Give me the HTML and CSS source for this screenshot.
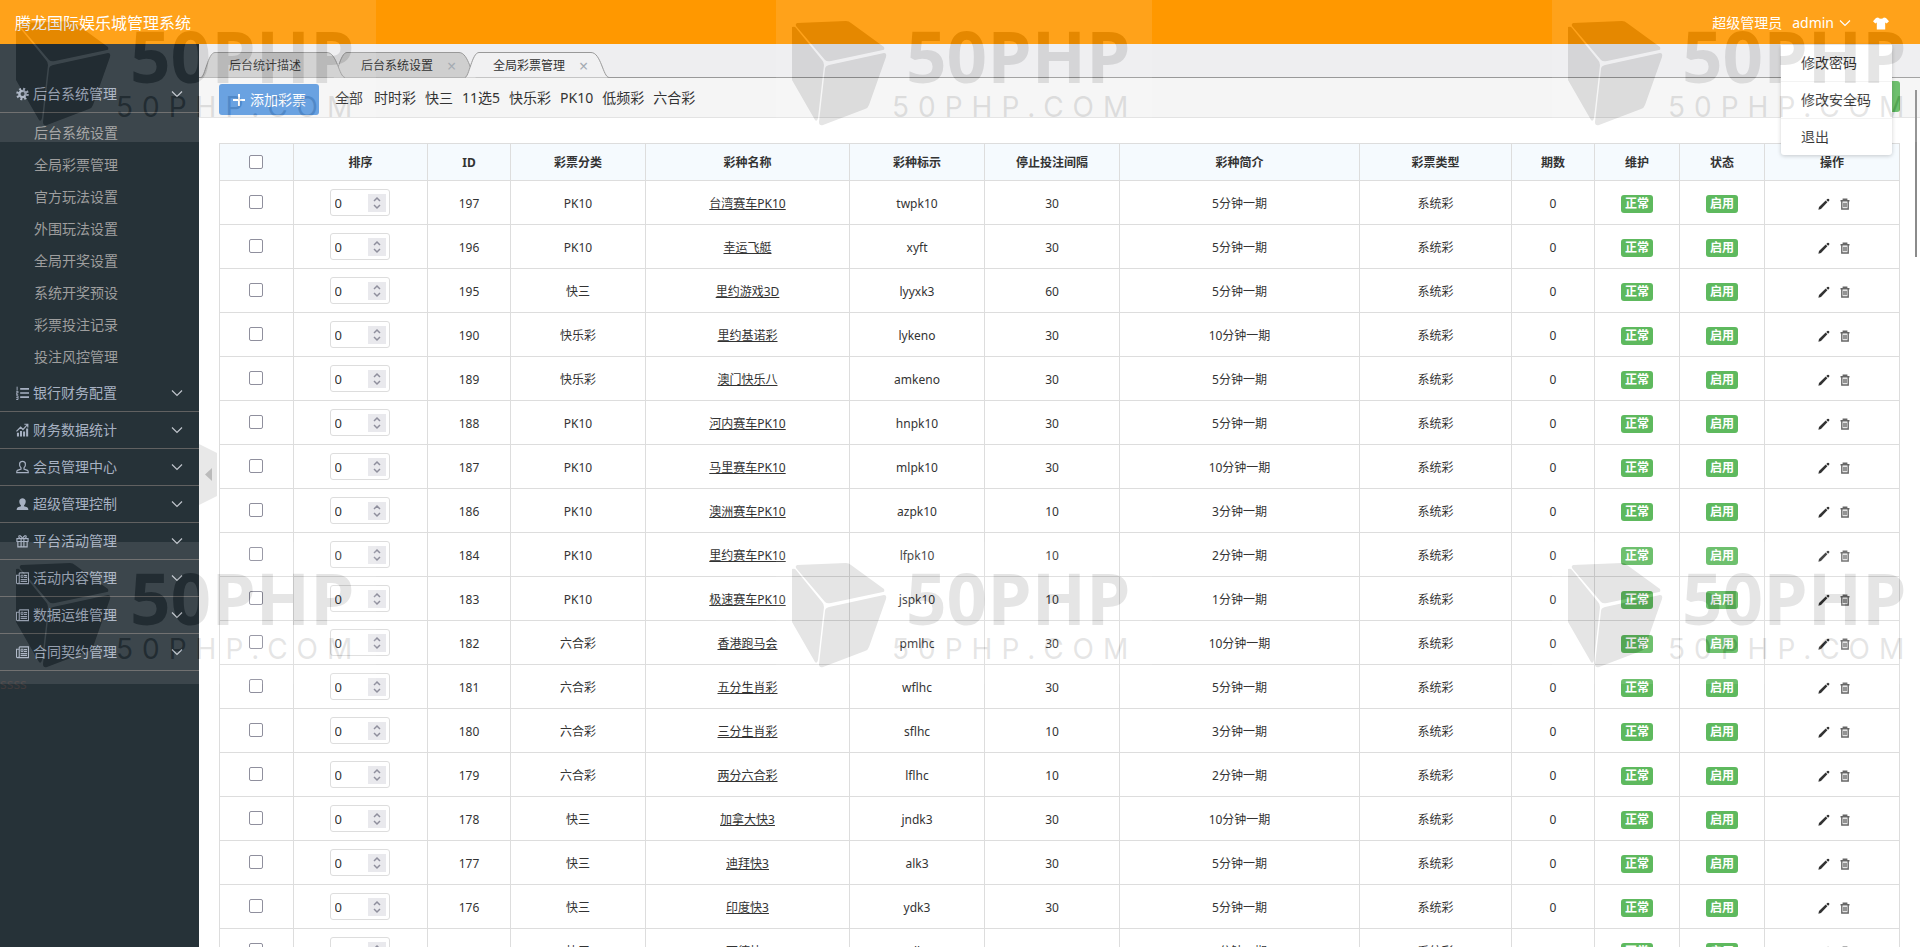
FILE: index.html
```
<!DOCTYPE html>
<html lang="zh-CN">
  <head>
    <meta charset="UTF-8" />
    <meta name="viewport" content="width=device-width, initial-scale=1.0" />
    <title>腾龙国际娱乐城管理系统</title>
    <link rel="stylesheet" href="styles.css">
  </head>

  <body>
    <!-- shared icons -->
    <svg class="sprite" aria-hidden="true">
      <symbol id="i-down" viewBox="0 0 12 12"><path d="M1 3.5 6 8.5 11 3.5" fill="none" stroke="currentColor" stroke-width="1.2"/></symbol>
      <symbol id="i-gear" viewBox="0 0 14 14">
        <circle cx="7" cy="7" r="3.4" fill="none" stroke="currentColor" stroke-width="2.6"/>
        <circle cx="7" cy="7" r="5.4" fill="none" stroke="currentColor" stroke-width="2.8" stroke-dasharray="2.1 2.14"/>
      </symbol>
      <symbol id="i-list" viewBox="0 0 14 14">
        <path d="M4.5 2.5H14M4.5 7H14M4.5 11.5H14" stroke="currentColor" stroke-width="1.8"/>
        <path d="M1.2.2v4M.2 5.2h2v1.6h-2v1.6h2.2M.2 10h2v4h-2M.2 12h2" fill="none" stroke="currentColor" stroke-width="1"/>
      </symbol>
      <symbol id="i-chart" viewBox="0 0 14 14">
        <path d="M1 10h2.200v4H1zM4.300 8h2.200v6H4.300zM7.600 8.500h2.200V14H7.600zM10.900 5.500h2.200V14h-2.200z" fill="currentColor"/>
        <path d="M.5 8.500 5 4l2.500 2.500L12.500 1M9 .8h3.700v3.600" fill="none" stroke="currentColor" stroke-width="1.300"/>
      </symbol>
      <symbol id="i-user" viewBox="0 0 14 14">
        <path d="M5.400 8C4 6.500 3.600 4.800 3.900 3.300 4.200 1.600 5.500 1 7 1s2.800.6 3.100 2.300C10.400 4.800 10 6.500 8.600 8v1.200l3.800 1.400q.8.500.8 2.400H.8q0-1.900.8-2.400l3.800-1.400z" fill="none" stroke="currentColor" stroke-width="1.300"/>
      </symbol>
      <symbol id="i-user-solid" viewBox="0 0 14 14">
        <path d="M5.300 8.400C3.800 7 3.400 5 3.600 3.400 3.900 1.600 5.300.7 7 .7s3.100.9 3.400 2.700C10.600 5 10.200 7 8.700 8.400v.9l3.300 1.100q1.300.6 1.300 3.100H.7q0-2.500 1.300-3.100l3.300-1.100z" fill="currentColor"/>
      </symbol>
      <symbol id="i-gift" viewBox="0 0 14 14">
        <path d="M1 4.500h12v3H1zM2 7.500h10v5.800H2zM5.500 4.500v8.800M8.500 4.500v8.800M6.800 4.300C6 1.500 3 .2 3 2.500c0 1.500 2 2 4 2 2 0 4-.5 4-2C11 .2 8 1.500 7.200 4.300" fill="none" stroke="currentColor" stroke-width="1.200"/>
      </symbol>
      <symbol id="i-news" viewBox="0 0 14 14">
        <path d="M3.500 1.500h10v11.500h-12q-1 0-1-1.500V4h3M3.500 1.500V12q-.2 1-1.500 1M8.500 4.500h3.500M8.500 6.500h3.500M5 8.700h7M5 10.800h7" fill="none" stroke="currentColor" stroke-width="1.200"/>
        <path d="M5.500 4h2v2.500h-2z" fill="none" stroke="currentColor"/>
      </symbol>
      <symbol id="i-pen" viewBox="0 0 12 12">
        <path d="M.4 11.700 1 9 7.700 2.600 9.400 4.300 3 11zM8.300 2 9.300 1q.7-.7 1.500 0l.3.3q.7.800 0 1.500l-1 1z" fill="currentColor"/>
      </symbol>
      <symbol id="i-trash" viewBox="0 0 12 12">
        <path d="M1.500 2.800h9M4.300 2.600V1.200h3.400v1.400M2.800 3v8h6.400V3M5 4.800v4.500M7 4.800v4.500" fill="none" stroke="currentColor" stroke-width="1.400"/>
      </symbol>
      <symbol id="i-shirt" viewBox="0 0 16 13">
        <path d="M5 .5q3 2.600 6 0l2 .6 3 3.200-2.300 2.300-1.500-1V12.500H3.800V5.600l-1.500 1L0 4.300l3-3.200z" fill="currentColor"/>
      </symbol>
      <symbol id="i-mark" viewBox="0 0 376 142">
        <rect width="376" height="142" fill="#fff"/>
        <path d="M21 23 70 21Q73 21 75 23L108 47Q109 50 107 50L55 61Q51 62 49 60L20 26Q19 24 21 23z"/>
        <path d="M16 27Q19 26 20 28L46 60Q48 62 48 65L42 118Q41 122 39 120L16 80z"/>
        <path d="M53 65 108 53Q111 53 110 57L93 105Q92 108 89 109L47 125Q43 126 43 122L49 69Q49 66 53 65z"/>
        <text class="mark-big" x="130" y="83">50PHP</text>
        <text class="mark-small" x="116" y="117">50PHP.COM</text>
      </symbol>
    </svg>

    <header class="header">
      <h1>腾龙国际娱乐城管理系统</h1>
      <nav class="userBar">
        <span>超级管理员</span>
        <div class="userMenu">
          <button class="userName" type="button">admin <svg><use href="#i-down"/></svg></button>
          <ul class="dropdown">
            <li><a href="#">修改密码</a></li>
            <li><a href="#">修改安全码</a></li>
            <li><a href="#">退出</a></li>
          </ul>
        </div>
        <button class="skin" type="button" aria-label="换肤"><svg><use href="#i-shirt"/></svg></button>
      </nav>
    </header>

    <div class="layout">
      <aside class="sidebar">
        <button class="menuTitle" type="button"><svg><use href="#i-gear"/></svg><span>后台系统管理</span><svg class="arrow"><use href="#i-down"/></svg></button>
        <ul class="subMenu">
          <li><a href="#">后台系统设置</a></li>
          <li><a href="#">全局彩票管理</a></li>
          <li><a href="#">官方玩法设置</a></li>
          <li><a href="#">外围玩法设置</a></li>
          <li><a href="#">全局开奖设置</a></li>
          <li><a href="#">系统开奖预设</a></li>
          <li><a href="#">彩票投注记录</a></li>
          <li><a href="#">投注风控管理</a></li>
        </ul>
        <button class="menuTitle" type="button"><svg><use href="#i-list"/></svg><span>银行财务配置</span><svg class="arrow"><use href="#i-down"/></svg></button>
        <button class="menuTitle" type="button"><svg><use href="#i-chart"/></svg><span>财务数据统计</span><svg class="arrow"><use href="#i-down"/></svg></button>
        <button class="menuTitle" type="button"><svg><use href="#i-user"/></svg><span>会员管理中心</span><svg class="arrow"><use href="#i-down"/></svg></button>
        <button class="menuTitle" type="button"><svg><use href="#i-user-solid"/></svg><span>超级管理控制</span><svg class="arrow"><use href="#i-down"/></svg></button>
        <button class="menuTitle" type="button"><svg><use href="#i-gift"/></svg><span>平台活动管理</span><svg class="arrow"><use href="#i-down"/></svg></button>
        <button class="menuTitle" type="button"><svg><use href="#i-news"/></svg><span>活动内容管理</span><svg class="arrow"><use href="#i-down"/></svg></button>
        <button class="menuTitle" type="button"><svg><use href="#i-news"/></svg><span>数据运维管理</span><svg class="arrow"><use href="#i-down"/></svg></button>
        <button class="menuTitle" type="button"><svg><use href="#i-news"/></svg><span>合同契约管理</span><svg class="arrow"><use href="#i-down"/></svg></button>
        <p class="debug">ssss</p>
      </aside>

      <main class="main">
        <button class="fold" type="button" aria-label="收起菜单">
          <svg viewBox="0 0 18 61"><path d="M0 0 18 9V52L0 61z" fill="#e8e8e8"/><path d="M6 30.500 13 24V37z" fill="#bbb"/></svg>
        </button>

        <div class="tabs">
          <a class="tab" href="#"><svg viewBox="0 0 144 26"><path d="M0 25.500C4 25 7 .5 14 .5H126C136 .5 138 25 144 25.500"/></svg><span>后台统计描述</span></a>
          <a class="tab" href="#"><svg viewBox="0 0 144 26"><path d="M0 25.500C4 25 7 .5 14 .5H126C136 .5 138 25 144 25.500"/></svg><span>后台系统设置</span><i>×</i></a>
          <a class="tab active" href="#"><svg viewBox="0 0 144 26"><path d="M0 25.500C4 25 7 .5 14 .5H126C136 .5 138 25 144 25.500"/></svg><span>全局彩票管理</span><i>×</i></a>
        </div>

        <div class="toolbar">
          <button class="addBtn" type="button">
            <svg viewBox="0 0 12 12"><path d="M6 0V12M0 6H12" stroke="#fff" stroke-width="2"/></svg>添加彩票
          </button>
          <nav class="filters">
            <a href="#">全部</a>
            <a href="#">时时彩</a>
            <a href="#">快三</a>
            <a href="#">11选5</a>
            <a href="#">快乐彩</a>
            <a href="#">PK10</a>
            <a href="#">低频彩</a>
            <a href="#">六合彩</a>
          </nav>
          <button class="refresh" type="button" aria-label="刷新"></button>
        </div>

        <div class="content">
          <table class="lottery">
            <colgroup>
              <col class="w74"><col class="w134"><col class="w83"><col class="w135"><col class="w204"><col class="w135"><col class="w135">
              <col class="w240"><col class="w152"><col class="w83"><col class="w85"><col class="w85"><col class="w135">
            </colgroup>
            <thead>
              <tr>
                <th class="control"><input type="checkbox" aria-label="全选"></th>
                <th>排序</th>
                <th>ID</th>
                <th>彩票分类</th>
                <th>彩种名称</th>
                <th>彩种标示</th>
                <th>停止投注间隔</th>
                <th>彩种简介</th>
                <th>彩票类型</th>
                <th>期数</th>
                <th>维护</th>
                <th>状态</th>
                <th>操作</th>
              </tr>
            </thead>
            <tbody id="lotteryList"></tbody>
          </table>
        </div>
        <div class="scrollThumb"></div>
      </main>
    </div>

    <div class="watermark" aria-hidden="true">
      <svg><use href="#i-mark"/></svg>
      <svg><use href="#i-mark"/></svg>
      <svg><use href="#i-mark"/></svg>
      <svg><use href="#i-mark"/></svg>
      <svg><use href="#i-mark"/></svg>
      <svg><use href="#i-mark"/></svg>
    </div>

    <script>
      // id, category, name, code, stop interval, description
      const lotteries = [
        [197, "PK10", "台湾赛车PK10", "twpk10", 30, "5分钟一期"],
        [196, "PK10", "幸运飞艇", "xyft", 30, "5分钟一期"],
        [195, "快三", "里约游戏3D", "lyyxk3", 60, "5分钟一期"],
        [190, "快乐彩", "里约基诺彩", "lykeno", 30, "10分钟一期"],
        [189, "快乐彩", "澳门快乐八", "amkeno", 30, "5分钟一期"],
        [188, "PK10", "河内赛车PK10", "hnpk10", 30, "5分钟一期"],
        [187, "PK10", "马里赛车PK10", "mlpk10", 30, "10分钟一期"],
        [186, "PK10", "澳洲赛车PK10", "azpk10", 10, "3分钟一期"],
        [184, "PK10", "里约赛车PK10", "lfpk10", 10, "2分钟一期"],
        [183, "PK10", "极速赛车PK10", "jspk10", 10, "1分钟一期"],
        [182, "六合彩", "香港跑马会", "pmlhc", 30, "10分钟一期"],
        [181, "六合彩", "五分生肖彩", "wflhc", 30, "5分钟一期"],
        [180, "六合彩", "三分生肖彩", "sflhc", 10, "3分钟一期"],
        [179, "六合彩", "两分六合彩", "lflhc", 10, "2分钟一期"],
        [178, "快三", "加拿大快3", "jndk3", 30, "10分钟一期"],
        [177, "快三", "迪拜快3", "alk3", 30, "5分钟一期"],
        [176, "快三", "印度快3", "ydk3", 30, "5分钟一期"],
        [175, "快三", "西德快3", "xdk3", 30, "3分钟一期"],
      ];

      document.getElementById("lotteryList").innerHTML = lotteries
        .map(
          ([id, type, name, code, stop, desc]) => `<tr>
            <td class="control"><input type="checkbox" aria-label="选择 ${id}"></td>
            <td class="control"><input class="sort" type="number" value="0" aria-label="排序 ${id}"></td>
            <td>${id}</td>
            <td>${type}</td>
            <td><a class="name" href="#">${name}</a></td>
            <td>${code}</td>
            <td>${stop}</td>
            <td>${desc}</td>
            <td>系统彩</td>
            <td>0</td>
            <td><span class="label">正常</span></td>
            <td><span class="label">启用</span></td>
            <td>
              <div class="ops">
                <a href="#" aria-label="编辑"><svg><use href="#i-pen"/></svg></a>
                <a class="del" href="#" aria-label="删除"><svg><use href="#i-trash"/></svg></a>
              </div>
            </td>
          </tr>`
        )
        .join("");
    </script>
  </body>
</html>
```
FILE: styles.css
```
* {
  box-sizing: border-box;
}

body {
  margin: 0;
  height: 100vh;
  display: flex;
  flex-direction: column;
  overflow: hidden;
  font-family: "Noto Sans", "Noto Sans CJK SC", sans-serif;
  font-size: 14px;
  line-height: 20px;
  color: #333;
}

a {
  color: inherit;
  text-decoration: none;
}

button {
  font: inherit;
  border: 0;
  padding: 0;
  background: none;
  color: inherit;
}

ul {
  list-style: none;
  margin: 0;
  padding: 0;
}

.sprite {
  position: absolute;
  width: 0;
  height: 0;
}

/* header */
.header {
  flex: none;
  display: flex;
  justify-content: space-between;
  align-items: center;
  height: 44px;
  padding: 2px 31px 0 15px;
  background: #ff9800;
  color: #fff;
}

.header h1 {
  margin: 0;
  font-size: 16px;
  font-weight: normal;
}

.userBar {
  display: flex;
  align-items: center;
  gap: 10px;
}

.userMenu {
  position: relative;
}

.userName {
  display: flex;
  align-items: center;
  gap: 5px;
}

.userName svg {
  width: 12px;
  height: 12px;
}

.skin {
  display: flex;
  margin-left: 12px;
}

.skin svg {
  width: 16px;
  height: 13px;
}

.dropdown {
  position: absolute;
  z-index: 5;
  top: 32px;
  right: -41px;
  width: 111px;
  background: #fff;
  color: #333;
  border-radius: 0 0 3px 3px;
  box-shadow: 0 1px 4px rgba(0, 0, 0, 0.2);
}

.dropdown li {
  border-bottom: 1px solid #f2f2f2;
}

.dropdown li:last-child {
  border-bottom: 0;
}

.dropdown a {
  display: block;
  padding: 8px 20px;
}

/* sidebar */
.layout {
  flex: 1;
  min-height: 0;
  display: flex;
}

.sidebar {
  flex: none;
  width: 199px;
  padding-top: 32px;
  background: #263238;
}

.menuTitle {
  display: flex;
  align-items: center;
  width: 100%;
  height: 37px;
  padding: 0 16px;
  border-bottom: 1px solid #616161;
  color: #a7b1c2;
}

.menuTitle svg {
  width: 13px;
  height: 14px;
  margin-right: 4px;
}

.menuTitle .arrow {
  width: 12px;
  height: 12px;
  margin: 0 0 0 auto;
  color: #c0c4cc;
}

.subMenu {
  padding: 4px 0 2px;
  color: #9e9e9e;
}

.subMenu a {
  display: block;
  padding: 6px 34px;
}

.debug {
  margin: 3px 0 0;
  color: #403a3b;
}

/* main */
.main {
  position: relative;
  flex: 1;
  min-width: 0;
  display: flex;
  flex-direction: column;
  background: #fff;
}

.fold {
  position: absolute;
  left: 0;
  top: 400px;
  width: 18px;
  height: 61px;
}

.fold svg {
  display: block;
}

.tabs {
  flex: none;
  display: flex;
  align-items: flex-end;
  height: 34px;
  padding-left: 2px;
  background: #eeeef0;
  border-bottom: 1px solid #999;
}

.tab {
  position: relative;
  display: flex;
  align-items: center;
  gap: 14px;
  width: 144px;
  height: 26px;
  margin: 0 -12px -1px 0;
  padding: 2px 0 0 28px;
  font-size: 12px;
}

.tab svg {
  position: absolute;
  left: 0;
  top: 0;
  width: 144px;
  height: 26px;
  fill: #cfcfcf;
  stroke: #999;
}

.tab span,
.tab i {
  position: relative;
}

.tab i {
  color: #a5abb2;
  font-style: normal;
  font-size: 16px;
}

.tab:first-child {
  z-index: 1;
}

.tab.active {
  z-index: 2;
}

.tab.active svg {
  fill: #f1f1f2;
}

.toolbar {
  flex: none;
  display: flex;
  align-items: center;
  height: 40px;
  padding: 0 20px;
  background: #f5f5f5;
  border-bottom: 1px solid #e3e3e3;
}

.addBtn {
  display: flex;
  align-items: center;
  gap: 5px;
  height: 31px;
  margin-top: 3px;
  padding: 1px 13px 0 14px;
  border-radius: 3px;
  background: #5a98de;
  color: #fff;
}

.addBtn svg {
  width: 12px;
  height: 12px;
}

.filters {
  display: flex;
  gap: 9px;
  margin-left: 16px;
}

.filters a:first-child {
  margin-right: 2px;
}

.refresh {
  width: 34px;
  height: 31px;
  margin-left: auto;
  margin-bottom: 3px;
  border-radius: 3px;
  background: #5eb95e;
}

.content {
  flex: 1;
  min-height: 0;
  padding: 25px 20px 0;
  overflow: hidden;
}

.scrollThumb {
  position: absolute;
  right: 3px;
  top: 46px;
  width: 2px;
  height: 167px;
  background: #8b8b8b;
}

/* table */
.lottery {
  width: 100%;
  table-layout: fixed;
  border-collapse: collapse;
  font-size: 12px;
  text-align: center;
}

.lottery th,
.lottery td {
  height: 44px;
  padding: 2px 0 0;
  border: 1px solid #ddd;
}

.lottery th {
  height: 37px;
  background: #f5fafe;
}

.lottery .control {
  padding: 0 2px 0 0;
}

.w74 { width: 74px; }
.w83 { width: 83px; }
.w85 { width: 85px; }
.w134 { width: 134px; }
.w135 { width: 135px; }
.w152 { width: 152px; }
.w204 { width: 204px; }
.w240 { width: 240px; }

input[type="checkbox"] {
  appearance: none;
  display: block;
  width: 14px;
  height: 14px;
  margin: 0 auto 1px;
  border: 1px solid #8f8f9d;
  border-radius: 2px;
  background: #fff;
}

.sort {
  appearance: textfield;
  display: block;
  width: 60px;
  height: 27px;
  margin: 0 auto;
  padding: 0 24px 0 4px;
  border: 1px solid #ddd;
  border-radius: 3px;
  font: inherit;
  font-size: 13px;
  color: #333;
  background: #fff url("data:image/svg+xml,%3Csvg xmlns='http://www.w3.org/2000/svg' width='18' height='18'%3E%3Crect width='18' height='18' fill='%23e9e9ed'/%3E%3Cpath d='M6 7l3-3 3 3M6 11l3 3 3-3' fill='none' stroke='%238f8f9d' stroke-width='1.500'/%3E%3C/svg%3E") no-repeat right 3px center;
}

.sort::-webkit-inner-spin-button {
  appearance: none;
}

.name {
  text-decoration: underline;
}

.label {
  display: inline-block;
  padding: 0 4px;
  border-radius: 3px;
  background: #5eb95e;
  color: #fff;
  font-weight: bold;
  line-height: 18px;
}

.ops {
  display: flex;
  justify-content: center;
  gap: 9px;
  padding-left: 5px;
}

.ops svg {
  display: block;
  width: 12px;
  height: 12px;
}

.del {
  color: #666;
}

/* watermark tiles over the whole page */
.watermark {
  position: fixed;
  z-index: 10;
  inset: 0;
  display: grid;
  grid-template-columns: repeat(3, 376px);
  grid-auto-rows: 142px;
  gap: 400px;
  overflow: hidden;
  pointer-events: none;
}

.watermark svg {
  width: 376px;
  height: 142px;
  opacity: 0.1;
}

.mark-big {
  font: bold 71px "Open Sans", sans-serif;
}

.mark-small {
  font: 28px Inter, sans-serif;
  letter-spacing: 9px;
}
```
